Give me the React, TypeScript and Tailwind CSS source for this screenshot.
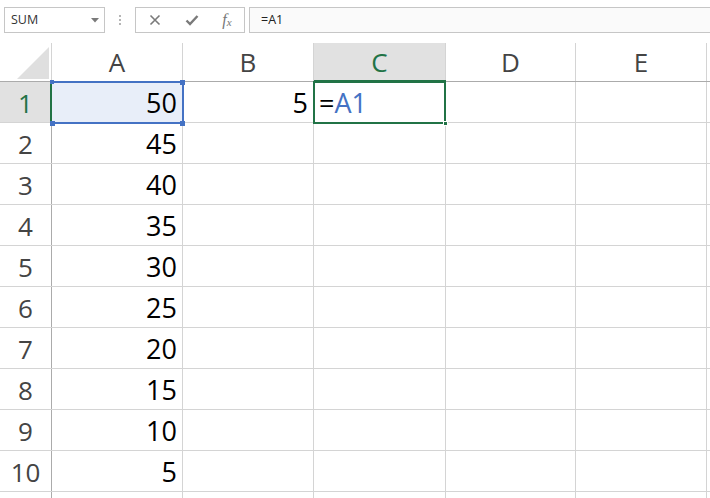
import React from "react";

const cols = [
  { l: "A", w: "w-[131px]" },
  { l: "B", w: "w-[131px]" },
  { l: "C", w: "w-[132px]" },
  { l: "D", w: "w-[130px]" },
  { l: "E", w: "w-[131px]" },
];

const aVals = ["50", "45", "40", "35", "30", "25", "20", "15", "10", "5"];

export default function App() {
  return (
    <div
      className="relative w-[710px] h-[498px] overflow-hidden bg-white text-[#222]"
      style={{ fontFamily: '"Open Sans", "Noto Sans", sans-serif' }}
    >
      {/* Toolbar */}
      <div className="flex items-start h-[43px] pt-[7px] pl-[4px]">
        <div className="relative w-[101px] h-[26px] border border-[#c6c6c6] flex items-center pl-[6px] text-[12.5px] text-[#333]">
          SUM
          <svg className="absolute right-[5px] top-[10px]" width="8" height="5" viewBox="0 0 8 5">
            <path d="M0 0 L8 0 L4 4.5 Z" fill="#7a7a7a" />
          </svg>
        </div>
        <div className="w-[30px] h-[26px] flex flex-col items-center justify-center gap-[2px]">
          <div className="w-[2px] h-[2px] bg-[#b5b5b5]" />
          <div className="w-[2px] h-[2px] bg-[#b5b5b5]" />
          <div className="w-[2px] h-[2px] bg-[#b5b5b5]" />
        </div>
        <div className="w-[110px] h-[26px] border border-[#c6c6c6] flex items-center">
          <div className="w-[37px] flex justify-center">
            <svg width="12" height="12" viewBox="0 0 12 12">
              <path d="M1.5 1.5 L10.5 10.5 M10.5 1.5 L1.5 10.5" stroke="#7a7a7a" strokeWidth="1.6" />
            </svg>
          </div>
          <div className="w-[37px] flex justify-center">
            <svg width="14" height="12" viewBox="0 0 14 12">
              <path d="M1.5 6.5 L5 10 L12.5 2" stroke="#7a7a7a" strokeWidth="2.4" fill="none" />
            </svg>
          </div>
          <div
            className="w-[34px] flex justify-center items-start text-[#777] italic text-[16px] leading-none"
            style={{ fontFamily: '"Liberation Serif", serif' }}
          >
            <span>f</span>
            <span className="text-[11px] mt-[5px]">x</span>
          </div>
        </div>
        <div className="ml-[4px] flex-1 h-[26px] border-y border-l border-[#c6c6c6] bg-[#fafafa] flex items-center pl-[11px] text-[12.5px] text-[#222]">
          =A1
        </div>
      </div>

      {/* Header row */}
      <div className="flex h-[39px] border-b border-[#ababab]">
        <div className="relative w-[52px] h-full border-r border-[#d4d4d4]">
          <svg className="absolute left-[17px] top-[4px]" width="32" height="32" viewBox="0 0 32 32">
            <path d="M32 0 L32 32 L0 32 Z" fill="#dfdfdf" />
          </svg>
        </div>
        {cols.map((c) => (
          <div
            key={c.l}
            className={`${c.w} h-full shrink-0 border-r border-[#d4d4d4] flex items-center justify-center text-[26px] ${
              c.l === "C" ? "bg-[#e1e1e1] text-[#217346]" : "text-[#444]"
            }`}
          >
            {c.l}
          </div>
        ))}
        <div className="flex-1" />
      </div>

      {/* Data rows */}
      {aVals.map((v, i) => (
        <div key={i} className="flex h-[41px] border-b border-[#d4d4d4]">
          <div
            className={`w-[52px] shrink-0 h-full border-r border-[#ababab] flex items-center justify-center pt-[2px] text-[26px] ${
              i === 0 ? "bg-[#e1e1e1] text-[#217346]" : "text-[#444]"
            }`}
          >
            {i + 1}
          </div>
          <div
            className={`w-[131px] shrink-0 h-full border-r border-[#d4d4d4] flex items-center justify-end pr-[5px] pt-[2px] text-[27px] text-black ${
              i === 0 ? "bg-[#e8eef9]" : ""
            }`}
          >
            {v}
          </div>
          <div className="w-[131px] shrink-0 h-full border-r border-[#d4d4d4] flex items-center justify-end pr-[5px] pt-[2px] text-[27px] text-black">
            {i === 0 ? "5" : ""}
          </div>
          <div className="w-[132px] shrink-0 h-full border-r border-[#d4d4d4] flex items-center pl-[5px] pt-[2px] text-[27px] text-black">
            {i === 0 ? (
              <span>
                =<span className="text-[#4472c4]">A1</span>
              </span>
            ) : null}
          </div>
          <div className="w-[130px] shrink-0 h-full border-r border-[#d4d4d4]" />
          <div className="w-[131px] shrink-0 h-full border-r border-[#d4d4d4]" />
          <div className="flex-1" />
        </div>
      ))}
      <div className="flex h-[10px]">
        <div className="w-[52px] shrink-0 h-full border-r border-[#ababab]" />
        <div className="w-[131px] shrink-0 h-full border-r border-[#d4d4d4]" />
        <div className="w-[131px] shrink-0 h-full border-r border-[#d4d4d4]" />
        <div className="w-[132px] shrink-0 h-full border-r border-[#d4d4d4]" />
        <div className="w-[130px] shrink-0 h-full border-r border-[#d4d4d4]" />
        <div className="w-[131px] shrink-0 h-full border-r border-[#d4d4d4]" />
      </div>

      {/* Overlays: header highlights */}
      <div className="absolute left-[314px] top-[80px] w-[132px] h-[2px] bg-[#217346]" />
      <div className="absolute left-[50px] top-[82px] w-[2px] h-[41px] bg-[#217346]" />

      {/* A1 reference selection */}
      <div className="absolute left-[52px] top-[81px] w-[132px] h-[43px] border-2 border-[#4472c4] border-l-0" />
      <div className="absolute left-[50px] top-[80px] w-[4px] h-[4px] bg-[#4472c4]" />
      <div className="absolute left-[180px] top-[80px] w-[5px] h-[5px] bg-[#4472c4]" />
      <div className="absolute left-[50px] top-[121px] w-[5px] h-[5px] bg-[#4472c4]" />
      <div className="absolute left-[180px] top-[121px] w-[5px] h-[5px] bg-[#4472c4]" />

      {/* C1 active cell */}
      <div className="absolute left-[313px] top-[81px] w-[133px] h-[43px] border-2 border-[#217346]" />
      <div className="absolute left-[443px] top-[121px] w-[5px] h-[5px] bg-[#217346] border border-white" />
    </div>
  );
}
